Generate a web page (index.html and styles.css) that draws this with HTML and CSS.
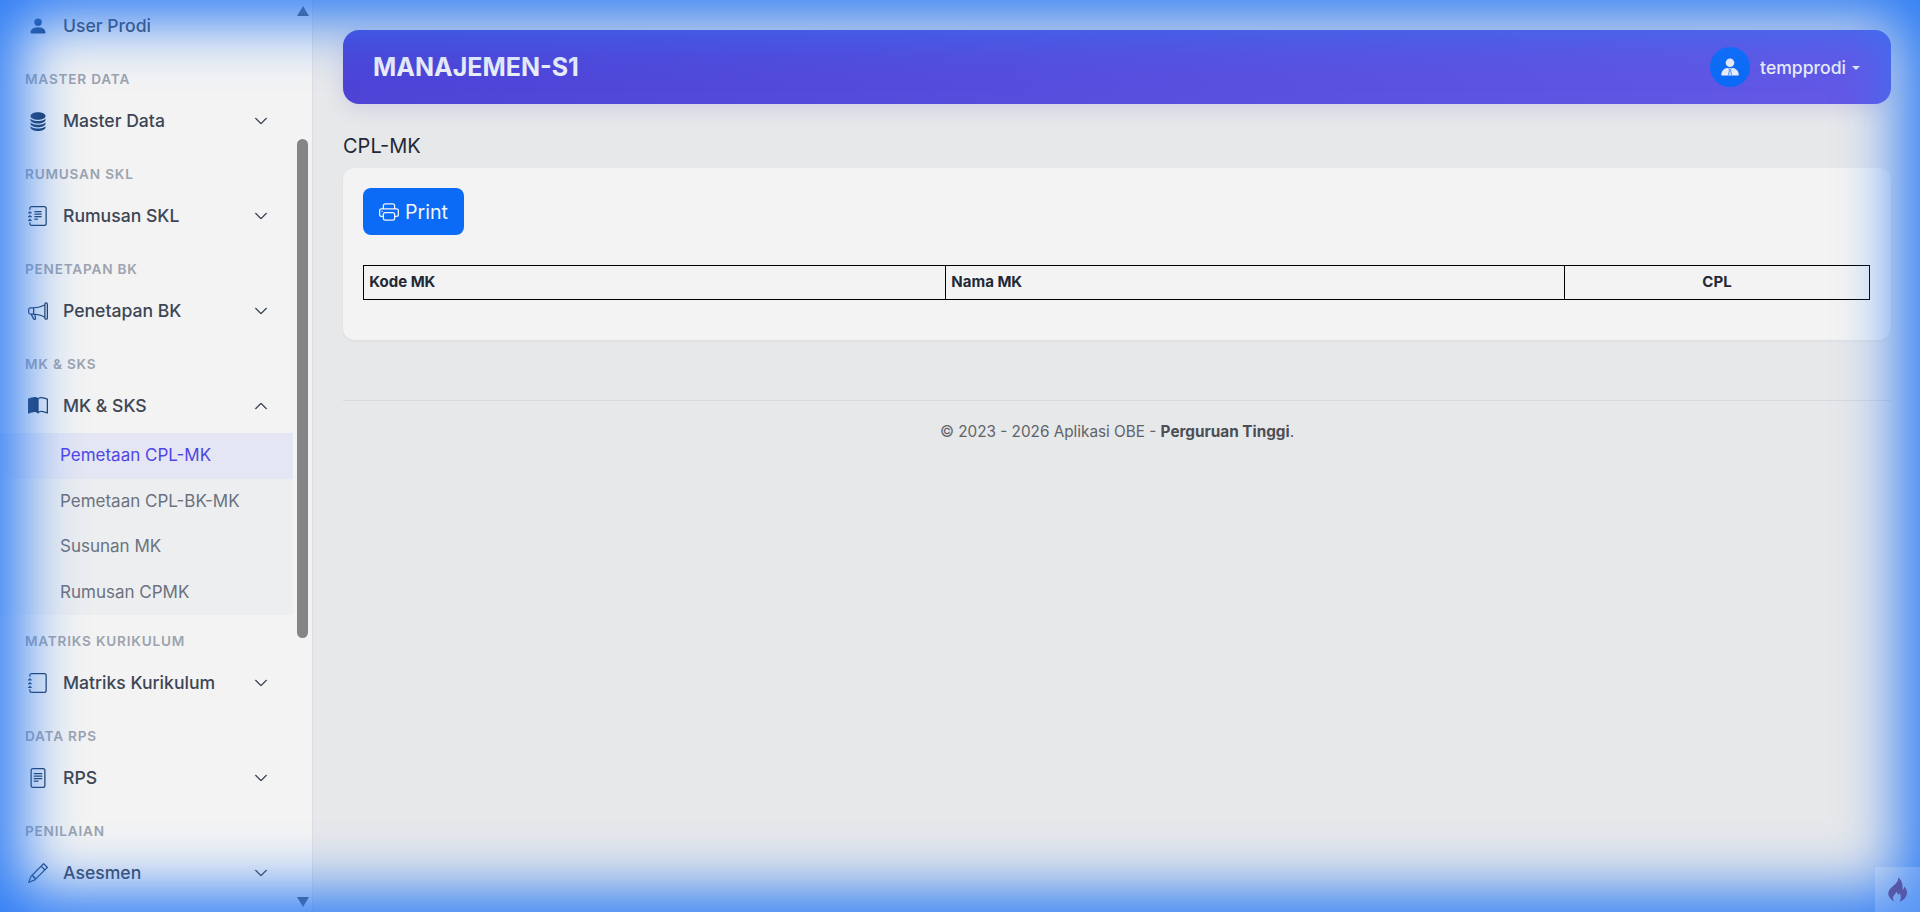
FILE: index.html
```html
<!DOCTYPE html>
<html lang="id">
<head>
<meta charset="utf-8">
<title>CPL-MK</title>
<link rel="stylesheet" href="styles.css">
</head>
<body>
<svg class="defs" width="0" height="0" aria-hidden="true">
  <symbol id="i-down" viewBox="0 0 16 16"><path fill-rule="evenodd" d="M1.646 4.646a.5.5 0 0 1 .708 0L8 10.293l5.646-5.647a.5.5 0 0 1 .708.708l-6 6a.5.5 0 0 1-.708 0l-6-6a.5.5 0 0 1 0-.708z" stroke="currentColor" stroke-width=".6"/></symbol>
  <symbol id="i-up" viewBox="0 0 16 16"><path fill-rule="evenodd" d="M7.646 4.646a.5.5 0 0 1 .708 0l6 6a.5.5 0 0 1-.708.708L8 5.707l-5.646 5.647a.5.5 0 0 1-.708-.708l6-6z" stroke="currentColor" stroke-width=".6"/></symbol>
</svg>
<div class="app">
  <aside class="sidebar">
    <nav class="menu">
      <a class="item"><svg class="ico" viewBox="0 0 16 16"><path d="M3 14s-1 0-1-1 1-4 6-4 6 3 6 4-1 1-1 1H3Zm5-6a3 3 0 1 0 0-6 3 3 0 0 0 0 6Z"/></svg><span class="label">User Prodi</span></a>

      <div class="heading">MASTER DATA</div>
      <a class="item"><svg class="ico" viewBox="0 0 16 16"><path d="M3.904 1.777C4.978 1.289 6.427 1 8 1s3.022.289 4.096.777C13.125 2.245 14 2.993 14 4s-.875 1.755-1.904 2.223C11.022 6.711 9.573 7 8 7s-3.022-.289-4.096-.777C2.875 5.755 2 5.007 2 4s.875-1.755 1.904-2.223Z"/><path d="M2 6.161V7c0 1.007.875 1.755 1.904 2.223C4.978 9.71 6.427 10 8 10s3.022-.289 4.096-.777C13.125 8.755 14 8.007 14 7v-.839c-.457.432-1.004.751-1.49.972C11.278 7.693 9.682 8 8 8s-3.278-.307-4.51-.867c-.486-.22-1.033-.54-1.49-.972Z"/><path d="M2 9.161V10c0 1.007.875 1.755 1.904 2.223C4.978 12.711 6.427 13 8 13s3.022-.289 4.096-.777C13.125 11.755 14 11.007 14 10v-.839c-.457.432-1.004.751-1.49.972-1.232.56-2.828.867-4.51.867s-3.278-.307-4.51-.867c-.486-.22-1.033-.54-1.49-.972Z"/><path d="M2 12.161V13c0 1.007.875 1.755 1.904 2.223C4.978 15.711 6.427 16 8 16s3.022-.289 4.096-.777C13.125 14.755 14 14.007 14 13v-.839c-.457.432-1.004.751-1.49.972-1.232.56-2.828.867-4.51.867s-3.278-.307-4.51-.867c-.486-.22-1.033-.54-1.49-.972Z"/></svg><span class="label">Master Data</span><svg class="chev"><use href="#i-down"/></svg></a>

      <div class="heading">RUMUSAN SKL</div>
      <a class="item"><svg class="ico" viewBox="0 0 16 16"><path d="M5 10.5a.5.5 0 0 1 .5-.5h2a.5.5 0 0 1 0 1h-2a.5.5 0 0 1-.5-.5zm0-2a.5.5 0 0 1 .5-.5h5a.5.5 0 0 1 0 1h-5a.5.5 0 0 1-.5-.5zm0-2a.5.5 0 0 1 .5-.5h5a.5.5 0 0 1 0 1h-5a.5.5 0 0 1-.5-.5zm0-2a.5.5 0 0 1 .5-.5h5a.5.5 0 0 1 0 1h-5a.5.5 0 0 1-.5-.5z"/><path d="M3 0h10a2 2 0 0 1 2 2v12a2 2 0 0 1-2 2H3a2 2 0 0 1-2-2v-1h1v1a1 1 0 0 0 1 1h10a1 1 0 0 0 1-1V2a1 1 0 0 0-1-1H3a1 1 0 0 0-1 1v1H1V2a2 2 0 0 1 2-2z"/><path d="M1 5v-.5a.5.5 0 0 1 1 0V5h.5a.5.5 0 0 1 0 1h-2a.5.5 0 0 1 0-1H1zm0 3v-.5a.5.5 0 0 1 1 0V8h.5a.5.5 0 0 1 0 1h-2a.5.5 0 0 1 0-1H1zm0 3v-.5a.5.5 0 0 1 1 0v.5h.5a.5.5 0 0 1 0 1h-2a.5.5 0 0 1 0-1H1z"/></svg><span class="label">Rumusan SKL</span><svg class="chev"><use href="#i-down"/></svg></a>

      <div class="heading">PENETAPAN BK</div>
      <a class="item"><svg class="ico" viewBox="0 0 16 16"><path d="M13 2.5a1.5 1.5 0 0 1 3 0v11a1.5 1.5 0 0 1-3 0v-.214c-2.162-1.241-4.49-1.843-6.912-2.083l.405 2.712A1 1 0 0 1 5.51 15.1h-.548a1 1 0 0 1-.916-.599l-1.85-3.49a68.14 68.14 0 0 0-.202-.003A2.014 2.014 0 0 1 0 9V7a2.02 2.02 0 0 1 1.992-2.013 74.663 74.663 0 0 0 2.483-.075c3.043-.154 6.148-.849 8.525-2.199V2.5zm1 0v11a.5.5 0 0 0 1 0v-11a.5.5 0 0 0-1 0zm-1 1.35c-2.344 1.205-5.209 1.842-8 2.033v4.233c.18.01.359.022.537.036 2.568.189 5.093.744 7.463 1.993V3.85zm-9 6.215v-4.13a95.09 95.09 0 0 1-1.992.052A1.02 1.02 0 0 0 1 7v2c0 .55.448 1.002 1.006 1.009A60.49 60.49 0 0 1 4 10.065zm-.657.975 1.609 3.037.01.024h.548l-.002-.014-.443-2.966a68.019 68.019 0 0 0-1.722-.082z"/></svg><span class="label">Penetapan BK</span><svg class="chev"><use href="#i-down"/></svg></a>

      <div class="heading">MK &amp; SKS</div>
      <a class="item"><svg class="ico" viewBox="0 0 16 16"><path d="M8.5 2.687c.654-.689 1.782-.886 3.112-.752 1.234.124 2.503.523 3.388.893v9.923c-.918-.35-2.107-.692-3.287-.81-1.094-.111-2.278-.039-3.213.492V2.687zM8 1.783C7.015.936 5.587.81 4.287.94c-1.514.153-3.042.672-3.994 1.105A.5.5 0 0 0 0 2.5v11a.5.5 0 0 0 .707.455c.882-.4 2.303-.881 3.68-1.02 1.409-.142 2.59.087 3.223.877a.5.5 0 0 0 .78 0c.633-.79 1.814-1.019 3.222-.877 1.378.139 2.8.62 3.681 1.02A.5.5 0 0 0 16 13.5v-11a.5.5 0 0 0-.293-.455c-.952-.433-2.48-.952-3.994-1.105C10.413.809 8.985.936 8 1.783z"/></svg><span class="label">MK &amp; SKS</span><svg class="chev"><use href="#i-up"/></svg></a>
      <div class="sub">
        <a class="sub-item active">Pemetaan CPL-MK</a>
        <a class="sub-item">Pemetaan CPL-BK-MK</a>
        <a class="sub-item">Susunan MK</a>
        <a class="sub-item">Rumusan CPMK</a>
      </div>

      <div class="heading">MATRIKS KURIKULUM</div>
      <a class="item"><svg class="ico" viewBox="0 0 16 16"><path d="M3 0h10a2 2 0 0 1 2 2v12a2 2 0 0 1-2 2H3a2 2 0 0 1-2-2v-1h1v1a1 1 0 0 0 1 1h10a1 1 0 0 0 1-1V2a1 1 0 0 0-1-1H3a1 1 0 0 0-1 1v1H1V2a2 2 0 0 1 2-2z"/><path d="M1 5v-.5a.5.5 0 0 1 1 0V5h.5a.5.5 0 0 1 0 1h-2a.5.5 0 0 1 0-1H1zm0 3v-.5a.5.5 0 0 1 1 0V8h.5a.5.5 0 0 1 0 1h-2a.5.5 0 0 1 0-1H1zm0 3v-.5a.5.5 0 0 1 1 0v.5h.5a.5.5 0 0 1 0 1h-2a.5.5 0 0 1 0-1H1z"/></svg><span class="label">Matriks Kurikulum</span><svg class="chev"><use href="#i-down"/></svg></a>

      <div class="heading">DATA RPS</div>
      <a class="item"><svg class="ico" viewBox="0 0 16 16"><path d="M5 4a.5.5 0 0 0 0 1h6a.5.5 0 0 0 0-1H5zm-.5 2.5A.5.5 0 0 1 5 6h6a.5.5 0 0 1 0 1H5a.5.5 0 0 1-.5-.5zM5 8a.5.5 0 0 0 0 1h6a.5.5 0 0 0 0-1H5zm0 2a.5.5 0 0 0 0 1h3a.5.5 0 0 0 0-1H5z"/><path d="M2 2a2 2 0 0 1 2-2h8a2 2 0 0 1 2 2v12a2 2 0 0 1-2 2H4a2 2 0 0 1-2-2V2zm10-1H4a1 1 0 0 0-1 1v12a1 1 0 0 0 1 1h8a1 1 0 0 0 1-1V2a1 1 0 0 0-1-1z"/></svg><span class="label">RPS</span><svg class="chev"><use href="#i-down"/></svg></a>

      <div class="heading">PENILAIAN</div>
      <a class="item"><svg class="ico" viewBox="0 0 16 16"><path d="M12.146.146a.5.5 0 0 1 .708 0l3 3a.5.5 0 0 1 0 .708l-10 10a.5.5 0 0 1-.168.11l-5 2a.5.5 0 0 1-.65-.65l2-5a.5.5 0 0 1 .11-.168l10-10zM11.207 2.5 13.5 4.793 14.793 3.5 12.5 1.207 11.207 2.5zm1.586 3L10.5 3.207 4 9.707V10h.5a.5.5 0 0 1 .5.5v.5h.5a.5.5 0 0 1 .5.5v.5h.293l6.5-6.5zm-9.761 5.175-.106.106-1.528 3.821 3.821-1.528.106-.106A.5.5 0 0 1 5 12.5V12h-.5a.5.5 0 0 1-.5-.5V11h-.5a.5.5 0 0 1-.468-.325z"/></svg><span class="label">Asesmen</span><svg class="chev"><use href="#i-down"/></svg></a>
    </nav>
    <div class="scrollbar">
      <span class="arrow-up"></span>
      <span class="thumb"></span>
      <span class="arrow-down"></span>
    </div>
  </aside>

  <main class="main">
    <header class="topbar">
      <div class="brand">MANAJEMEN-S1</div>
      <div class="user">
        <span class="avatar"><svg class="avatar-ico" viewBox="0 0 20 20"><circle cx="10" cy="5.300" r="4.800"/><path d="M.8 19.500c-.3 0-.5-.2-.5-.5 0-4.200 2.800-7.400 6.400-7.800h6.600c3.600.4 6.400 3.600 6.400 7.800 0 .3-.2.5-.5.5z"/><path class="avatar-tie" d="M8.500 11.200l.9 2-1 5.800M11.500 11.200l-.9 2 1 5.800"/></svg></span>
        <span class="user-name">tempprodi</span>
        <span class="caret"></span>
      </div>
    </header>

    <h1 class="page-title">CPL-MK</h1>

    <section class="card">
      <button class="btn-print" type="button"><svg class="print-ico" viewBox="0 0 16 16"><path d="M2.500 8a.5.5 0 1 0 0-1 .5.5 0 0 0 0 1z"/><path d="M5 1a2 2 0 0 0-2 2v2H2a2 2 0 0 0-2 2v3a2 2 0 0 0 2 2h1v1a2 2 0 0 0 2 2h6a2 2 0 0 0 2-2v-1h1a2 2 0 0 0 2-2V7a2 2 0 0 0-2-2h-1V3a2 2 0 0 0-2-2H5zM4 3a1 1 0 0 1 1-1h6a1 1 0 0 1 1 1v2H4V3zm1 5a2 2 0 0 0-2 2v1H2a1 1 0 0 1-1-1V7a1 1 0 0 1 1-1h12a1 1 0 0 1 1 1v3a1 1 0 0 1-1 1h-1v-1a2 2 0 0 0-2-2H5zm7 2v3a1 1 0 0 1-1 1H5a1 1 0 0 1-1-1v-3a1 1 0 0 1 1-1h6a1 1 0 0 1 1 1z"/></svg>Print</button>
      <table class="grid">
        <colgroup><col class="c1"><col class="c2"><col class="c3"></colgroup>
        <thead>
          <tr><th>Kode MK</th><th>Nama MK</th><th class="center">CPL</th></tr>
        </thead>
      </table>
    </section>

    <footer class="foot">© 2023 - 2026 Aplikasi OBE - <strong>Perguruan Tinggi</strong>.</footer>
  </main>
</div>

<div class="glow"></div>
<div class="debug-badge"><svg class="flame" viewBox="0 0 20 26"><path d="M10.500 0c1 3.500-1 5.500-3 7.500C5 10 1.500 12 .5 15.500c-1 4.500 2.500 8.500 6.500 10.500-2-2.500-2.500-4.500-1-6.500.8-1.100 2-2 2.500-4 1.500 1 2 2 2.500 3.500.6-.7.9-1.500.8-2.500 2 2.500 2.500 6 .2 9.500 4.500-1.500 8-5 8-9.500 0-3-1.500-5.500-3-7 .2 1.500-.2 3-1.500 4C15.500 8 15 3 10.500 0z"/></svg></div>
</body>
</html>
```

FILE: styles.css
```css
* { box-sizing: border-box; }
html, body { margin: 0; height: 100%; }
body {
  font-family: Inter, "Liberation Sans", sans-serif;
  background: #e7e8ea;
  color: #1f2937;
  overflow: hidden;
}
.defs { position: absolute; }
.app { display: flex; height: 912px; overflow: hidden; }

/* sidebar */
.sidebar {
  width: 313px;
  flex: none;
  display: flex;
  background: #f3f3f3;
  border-right: 1px solid #dcdde3;
  overflow: hidden;
}
.menu { width: 293px; flex: none; padding-top: 3px; }
.item {
  display: flex;
  align-items: center;
  height: 46px;
  padding: 0 25px 0 28px;
  color: #3d4654;
  font-size: 17.600px;
  font-weight: 450;
}
.ico { width: 20px; height: 20px; flex: none; fill: #1e3a5f; }
.label { flex: 1; margin-left: 15px; padding-bottom: 1px; }
.chev { width: 14px; height: 14px; flex: none; fill: #374151; color: #374151; }
.heading {
  padding: 22px 0 11px 25px;
  height: 49px;
  font-size: 13.600px;
  line-height: 16px;
  font-weight: 600;
  letter-spacing: .8px;
  color: #9ca3af;
}
.sub { background: #eceef0; margin: 4px 0 -4px; }
.sub-item {
  display: flex;
  align-items: center;
  height: 45.500px;
  padding: 0 0 1px 60px;
  font-size: 17px;
  color: #6b7280;
}
.sub-item.active { background: #e4e7f3; color: #4f46e5; }

/* scrollbar */
.scrollbar {
  flex: 1;
  display: flex;
  flex-direction: column;
  align-items: center;
  padding: 6px 0 5px;
}
.arrow-up, .arrow-down {
  width: 0; height: 0;
  border-left: 6.500px solid transparent;
  border-right: 6.500px solid transparent;
}
.arrow-up { border-bottom: 10px solid #4f4f4f; }
.arrow-down { border-top: 10px solid #4f4f4f; margin-top: auto; }
.thumb {
  width: 11px;
  height: 499px;
  margin-top: 123px;
  background: #858585;
  border-radius: 6px;
}

/* main */
.main { flex: 1; min-width: 0; padding: 30px 29px 0 30px; }
.topbar {
  height: 74px;
  display: flex;
  align-items: center;
  justify-content: space-between;
  padding: 0 31px 0 30px;
  border-radius: 16px;
  background: linear-gradient(135deg, #4c43d6 0%, #6359e6 100%);
  box-shadow: 0 4px 20px rgba(67, 56, 202, .15);
  color: #eef0f8;
}
.brand { font-size: 25px; font-weight: 700; }
.user { display: flex; align-items: center; }
.avatar {
  width: 40px; height: 40px;
  border-radius: 50%;
  background: #0c6bf6;
  display: flex;
  align-items: center;
  justify-content: center;
}
.avatar-ico { width: 18px; height: 18px; fill: #eef0f8; }
.avatar-tie { fill: none; stroke: #0c6bf6; stroke-width: .8; }
.user-name { margin-left: 10px; font-size: 17.600px; font-weight: 500; }
.caret {
  margin-left: 6px;
  margin-top: 2px;
  border-top: 4.800px solid #eef0f8;
  border-left: 4.800px solid transparent;
  border-right: 4.800px solid transparent;
}
.page-title {
  margin: 30px 0 10px;
  font-size: 20px;
  line-height: 24px;
  font-weight: 400;
  color: #1f2937;
}
.card {
  height: 172px;
  padding: 20px;
  background: #f3f3f3;
  border-radius: 12px;
  box-shadow: 0 1px 3px rgba(0, 0, 0, .05);
}
.btn-print {
  display: flex;
  align-items: center;
  gap: 6px;
  height: 47px;
  width: 101px;
  padding: 0 16px;
  border: 0;
  border-radius: 8px;
  background: #0c6bf6;
  color: #f3f5f9;
  font: 400 19.600px Inter, "Liberation Sans", sans-serif;
}
.print-ico { width: 20px; height: 20px; fill: #f3f5f9; flex: none; }
.grid {
  margin-top: 30px;
  width: 1506px;
  table-layout: fixed;
  border-collapse: collapse;
}
.c1 { width: 582px; }
.c2 { width: 619px; }
.c3 { width: 305px; }
.grid th {
  height: 34px;
  padding: 0 5.300px 2px;
  border: 1px solid #000;
  text-align: left;
  font-size: 15px;
  font-weight: 700;
  color: #1f2937;
}
.grid th.center { text-align: center; }
.foot {
  margin-top: 60px;
  padding-top: 21px;
  border-top: 1px solid #d8d9df;
  text-align: center;
  font-size: 15.300px;
  line-height: 20px;
  color: #5f6368;
}
.foot strong { font-weight: 700; color: #4b4f55; }

/* overlays */
.glow {
  position: fixed;
  inset: 0;
  pointer-events: none;
  box-shadow: inset 0 0 60px 20px #2b7bf5;
}
.debug-badge {
  position: fixed;
  right: 0;
  bottom: 0;
  width: 45px;
  height: 45px;
  background: rgba(255, 255, 255, .16);
  display: flex;
  align-items: center;
  justify-content: center;
}
.flame { width: 19px; height: 25px; fill: #5558a8; }
```
